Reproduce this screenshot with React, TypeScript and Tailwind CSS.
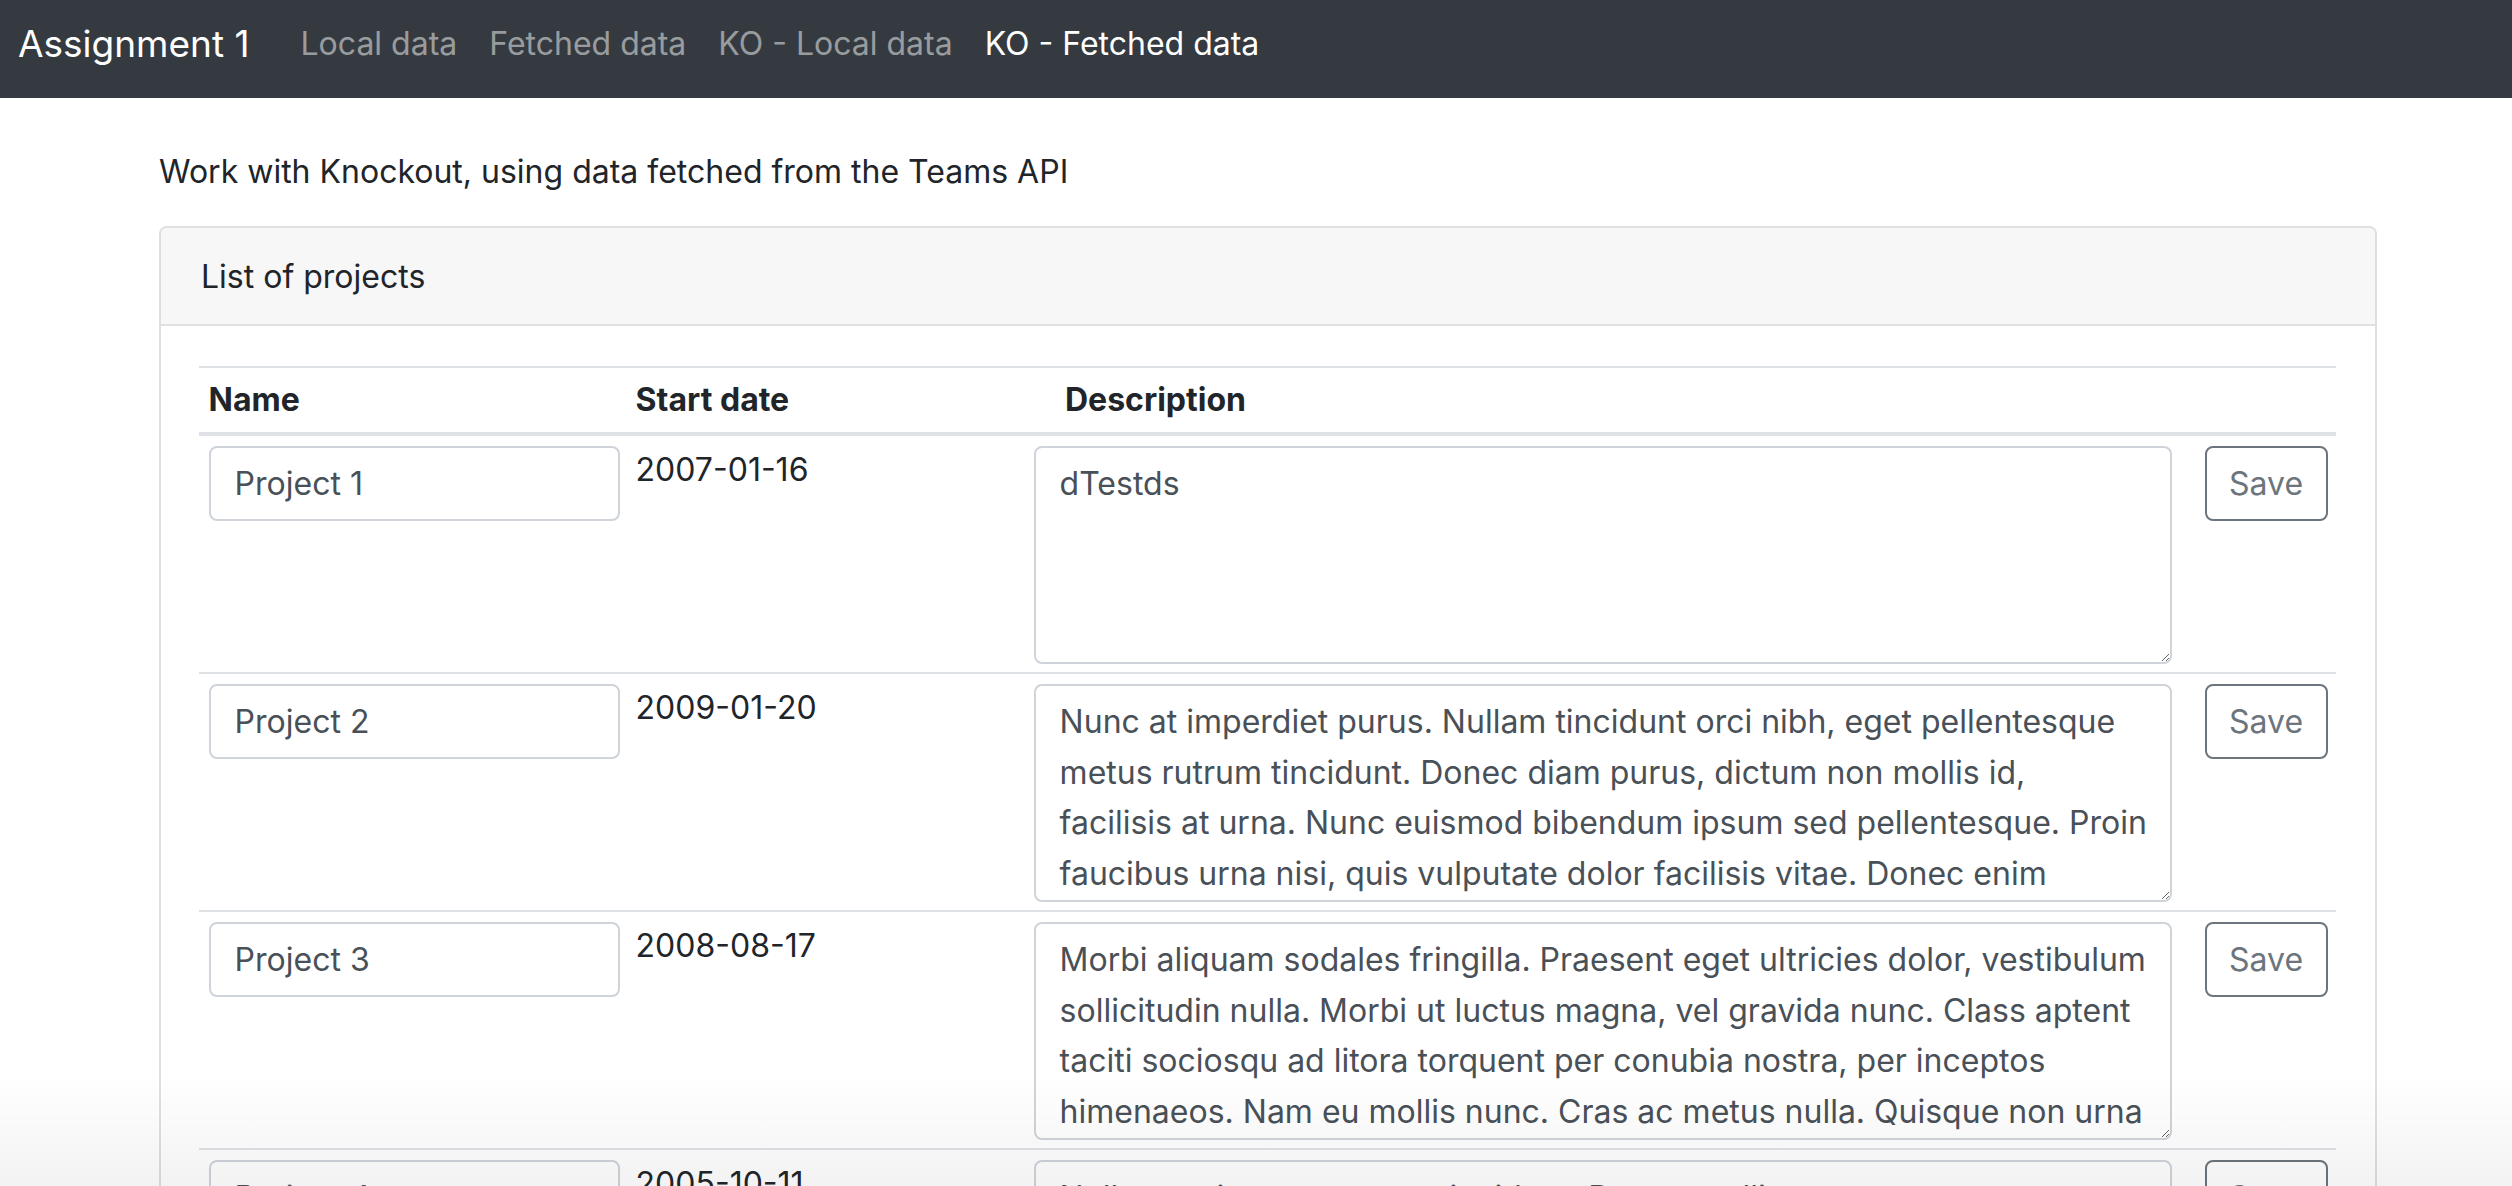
import React from "react";

const rows = [
  {
    name: "Project 1",
    date: "2007-01-16",
    desc: "dTestds",
  },
  {
    name: "Project 2",
    date: "2009-01-20",
    desc:
      "Nunc at imperdiet purus. Nullam tincidunt orci nibh, eget pellentesque\nmetus rutrum tincidunt. Donec diam purus, dictum non mollis id,\nfacilisis at urna. Nunc euismod bibendum ipsum sed pellentesque. Proin\nfaucibus urna nisi, quis vulputate dolor facilisis vitae. Donec enim\nlibero, dignissim at placerat quis, tempus vitae lectus. Nulla facilisi.",
  },
  {
    name: "Project 3",
    date: "2008-08-17",
    desc:
      "Morbi aliquam sodales fringilla. Praesent eget ultricies dolor, vestibulum\nsollicitudin nulla. Morbi ut luctus magna, vel gravida nunc. Class aptent\ntaciti sociosqu ad litora torquent per conubia nostra, per inceptos\nhimenaeos. Nam eu mollis nunc. Cras ac metus nulla. Quisque non urna\nligula. Etiam tincidunt, lectus ut pulvinar dapibus, nibh lacus tempor.",
  },
  {
    name: "Project 4",
    date: "2005-10-11",
    desc:
      "Nulla porttitor accumsan tincidunt. Donec mollis\nsapien quis lectus volutpat, sed gravida arcu feugiat.",
  },
];

export default function App() {
  return (
    <div
      className="relative h-[1186px] overflow-hidden bg-white text-[#212529]"
      style={{ fontFamily: "Inter, 'Liberation Sans', sans-serif" }}
    >
      <nav className="flex h-[98px] items-center bg-[#343a40] pb-[11px] pl-[18px]">
        <span className="mr-[35px] text-[37px] leading-[56px] text-white">Assignment 1</span>
        <div className="flex items-center text-[32px] leading-[48px]">
          <span className="px-[16px] text-white/50">Local data</span>
          <span className="px-[16px] text-white/50">Fetched data</span>
          <span className="px-[16px] text-white/50">KO - Local data</span>
          <span className="px-[16px] text-white">KO - Fetched data</span>
        </div>
      </nav>

      <main className="pl-[159px] pr-[135px]">
        <p className="mt-[50px] mb-[30px] text-[32px] leading-[48px]">
          Work with Knockout, using data fetched from the Teams API
        </p>

        <div className="rounded-[8px] border-2 border-[#dfdfdf]">
          <div className="rounded-t-[6px] border-b-2 border-[#dfdfdf] bg-[#f7f7f7] px-[40px] pt-[25px] pb-[23px] text-[32px] leading-[48px]">
            List of projects
          </div>
          <div className="pl-[38px] pr-[39px] pt-[40px] pb-[40px]">
            <table className="w-full table-fixed border-collapse text-[32px] leading-[48px]">
              <colgroup>
                <col className="w-[427px]" />
                <col className="w-[398px]" />
                <col className="w-[1171px]" />
                <col />
              </colgroup>
              <thead>
                <tr>
                  <th className="border-t-2 border-b-4 border-[#dee2e6] px-[9.6px] py-[8px] text-left font-bold">
                    Name
                  </th>
                  <th className="border-t-2 border-b-4 border-[#dee2e6] px-[9.6px] py-[8px] text-left font-bold">
                    Start date
                  </th>
                  <th className="border-t-2 border-b-4 border-[#dee2e6] pl-[41px] pr-[9.6px] py-[8px] text-left font-bold">
                    Description
                  </th>
                  <th className="border-t-2 border-b-4 border-[#dee2e6] px-[9.6px] py-[8px]"></th>
                </tr>
              </thead>
              <tbody>
                {rows.map((r) => (
                  <tr key={r.name}>
                    <td className="border-t-2 border-[#dee2e6] px-[9.6px] pt-[10px] pb-[8px] align-top">
                      <input
                        defaultValue={r.name}
                        className="block h-[75px] w-[411px] rounded-[8px] border-2 border-[#ced4da] bg-white px-[24px] py-[12px] text-[32px] leading-[48px] text-[#495057] outline-none"
                      />
                    </td>
                    <td className="border-t-2 border-[#dee2e6] px-[9.6px] pt-[10px] pb-[8px] align-top">
                      {r.date}
                    </td>
                    <td className="border-t-2 border-[#dee2e6] px-[9.6px] pt-[10px] pb-[8px] align-top">
                      <textarea
                        defaultValue={r.desc}
                        wrap="off"
                        className="block h-[218px] w-[1138px] resize-y overflow-hidden rounded-[8px] border-2 border-[#ced4da] bg-white px-[24px] pt-[11px] pb-[12px] text-[32px] leading-[50.5px] text-[#495057] outline-none"
                      />
                    </td>
                    <td className="border-t-2 border-[#dee2e6] px-[9.6px] pt-[10px] pb-[8px] align-top">
                      <button className="flex h-[75px] w-[123px] items-center justify-center rounded-[8px] border-2 border-[#6c757d] bg-white text-[32px] leading-[48px] text-[#6c757d]">
                        Save
                      </button>
                    </td>
                  </tr>
                ))}
              </tbody>
            </table>
          </div>
        </div>
      </main>

      <div className="pointer-events-none absolute inset-x-0 bottom-0 h-[110px] bg-gradient-to-b from-transparent to-black/[0.05]" />
    </div>
  );
}
